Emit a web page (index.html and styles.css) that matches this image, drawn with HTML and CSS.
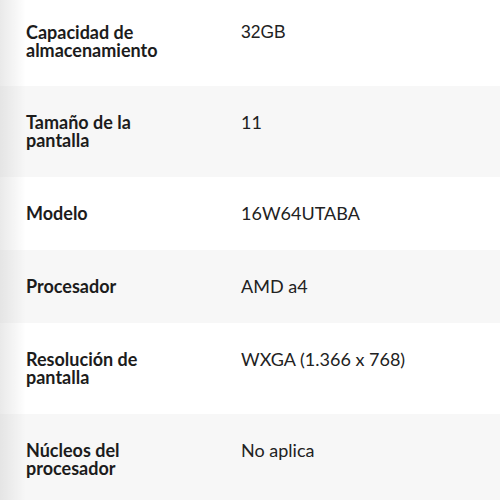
FILE: index.html
```html
<!DOCTYPE html>
<html lang="es">
<head>
<meta charset="utf-8">
<title>Especificaciones</title>
<link rel="stylesheet" href="styles.css">
</head>
<body>
<div class="specs">
  <div class="row first">
    <div class="label">Capacidad de almacenamiento</div>
    <div class="value alt-font">32GB</div>
  </div>
  <div class="row shaded">
    <div class="label">Tamaño de la pantalla</div>
    <div class="value">11</div>
  </div>
  <div class="row">
    <div class="label">Modelo</div>
    <div class="value">16W64UTABA</div>
  </div>
  <div class="row shaded">
    <div class="label">Procesador</div>
    <div class="value">AMD a4</div>
  </div>
  <div class="row">
    <div class="label">Resolución de pantalla</div>
    <div class="value">WXGA (1.366 x 768)</div>
  </div>
  <div class="row shaded">
    <div class="label">Núcleos del procesador</div>
    <div class="value">No aplica</div>
  </div>
</div>
</body>
</html>
```

FILE: styles.css
```css
html, body {
  margin: 0;
  padding: 0;
  background: #ffffff;
}

body {
  font-family: Lato, "Open Sans", sans-serif;
  font-size: 18px;
  line-height: 18px;
  color: #222222;
  overflow: hidden;
}

.specs {
  display: flex;
  flex-direction: column;
}

.row {
  display: grid;
  grid-template-columns: 241px 1fr;
  padding: 27px 0 28px 0;
  background: linear-gradient(to right, rgba(0, 0, 0, 0.085), rgba(0, 0, 0, 0) 26px), #ffffff;
}

.row.first {
  padding-top: 23px;
  padding-bottom: 27px;
}

.row.shaded {
  background: linear-gradient(to right, rgba(0, 0, 0, 0.075), rgba(0, 0, 0, 0) 26px), #f7f7f7;
}

.label {
  padding-left: 26px;
  max-width: 160px;
  font-weight: 700;
  color: #1c1c1c;
}

.value {
  font-weight: 400;
  color: #222222;
}

.alt-font {
  font-family: "Liberation Sans", Arial, sans-serif;
  font-size: 17.5px;
}
```
